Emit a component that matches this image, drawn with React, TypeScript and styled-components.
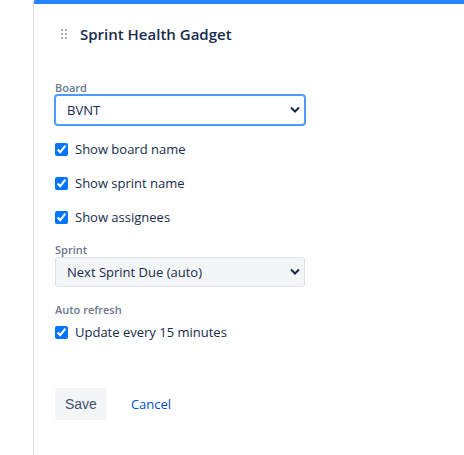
import React from "react";
import styled, { createGlobalStyle } from "styled-components";

const GlobalStyle = createGlobalStyle`
  * { box-sizing: border-box; }
  body {
    margin: 0;
    background: #fff;
    color: #172b4d;
    font: 13px/20px "Open Sans", "Noto Sans", sans-serif;
  }
`;

const Page = styled.main`
  min-height: 100vh;
  padding-left: 33px;
  display: flex;
`;

const Gadget = styled.section`
  flex: 1;
  border-top: 4px solid #2684ff;
  border-left: 1px solid #dfe1e6;
  border-top-left-radius: 3px;
`;

const Header = styled.header`
  display: flex;
  align-items: center;
  gap: 10px;
  padding: 20px 24px 0;
  color: #a5adba;
`;

const Title = styled.h1`
  margin: 0;
  color: #172b4d;
  font-size: 15px;
  font-weight: 600;
  line-height: 20px;
`;

const Form = styled.form`
  display: flex;
  flex-direction: column;
  padding: 37px 21px 0;
`;

const Caption = styled.label`
  color: #6b778c;
  font-size: 11px;
  font-weight: 600;
  line-height: 14px;
`;

const Field = styled.div`
  display: flex;
  flex-direction: column;
  max-width: 250px;
`;

const SelectBox = styled.div<{ $active?: boolean }>`
  position: relative;
  display: flex;
  height: 30px;
  border: 1px solid ${(p) => (p.$active ? "#4c9aff" : "#dfe1e6")};
  border-radius: 3px;
  box-shadow: ${(p) => (p.$active ? "0 0 0 1px #4c9aff" : "none")};
  background: ${(p) => (p.$active ? "#fff" : "#f4f5f7")};
`;

const Select = styled.select`
  appearance: none;
  flex: 1;
  border: 0;
  outline: 0;
  padding: 0 24px 0 11px;
  background: transparent;
  color: #172b4d;
  font: inherit;
`;

const Chevron = styled.svg`
  position: absolute;
  right: 4px;
  top: 50%;
  margin-top: -4px;
  pointer-events: none;
`;

const CheckList = styled.div`
  display: flex;
  flex-direction: column;
  gap: 14px;
  padding: 14px 0 16px;
`;

const CheckRow = styled.label`
  display: flex;
  align-items: center;
  gap: 7px;
`;

const Checkbox = styled.input`
  width: 13px;
  height: 13px;
  margin: 0;
  accent-color: #0075ff;
`;

const Refresh = styled.fieldset`
  margin: 16px 0 0;
  padding: 0;
  border: 0;
`;

const Legend = styled.legend`
  margin-bottom: 5px;
  padding: 0;
  color: #6b778c;
  font-size: 11px;
  font-weight: 600;
  line-height: 14px;
`;

const Actions = styled.div`
  display: flex;
  align-items: center;
  gap: 24px;
  padding-top: 46px;
`;

const SaveButton = styled.button`
  height: 32px;
  padding: 0 10px;
  border: 0;
  border-radius: 3px;
  background: #f4f5f7;
  color: #42526e;
  font: 14px "Liberation Sans", sans-serif;
`;

const Cancel = styled.a`
  color: #0052cc;
  text-decoration: none;
`;

function DragHandle() {
  return (
    <svg width="12" height="12" viewBox="0 0 12 12" fill="currentColor" aria-hidden="true">
      {[1, 5, 9].flatMap((y) => [3, 7].map((x) => <rect key={`${x}-${y}`} x={x} y={y} width="2" height="2" />))}
    </svg>
  );
}

function Dropdown({ id, label, value, active }: { id: string; label: string; value: string; active?: boolean }) {
  return (
    <Field>
      <Caption htmlFor={id}>{label}</Caption>
      <SelectBox $active={active}>
        <Select id={id}>
          <option>{value}</option>
        </Select>
        <Chevron width="10" height="8" viewBox="0 0 10 8" fill="none" stroke="#172b4d" strokeWidth="2" aria-hidden="true">
          <path d="M1 1.5 5 5.5 9 1.5" />
        </Chevron>
      </SelectBox>
    </Field>
  );
}

function Check({ children }: { children: React.ReactNode }) {
  return (
    <CheckRow>
      <Checkbox type="checkbox" defaultChecked />
      {children}
    </CheckRow>
  );
}

export default function App() {
  return (
    <Page>
      <GlobalStyle />
      <Gadget>
        <Header>
          <DragHandle />
          <Title>Sprint Health Gadget</Title>
        </Header>
        <Form onSubmit={(e) => e.preventDefault()}>
          <Dropdown id="board" label="Board" value="BVNT" active />
          <CheckList>
            <Check>Show board name</Check>
            <Check>Show sprint name</Check>
            <Check>Show assignees</Check>
          </CheckList>
          <Dropdown id="sprint" label="Sprint" value="Next Sprint Due (auto)" />
          <Refresh>
            <Legend>Auto refresh</Legend>
            <Check>Update every 15 minutes</Check>
          </Refresh>
          <Actions>
            <SaveButton type="submit">Save</SaveButton>
            <Cancel href="#">Cancel</Cancel>
          </Actions>
        </Form>
      </Gadget>
    </Page>
  );
}
